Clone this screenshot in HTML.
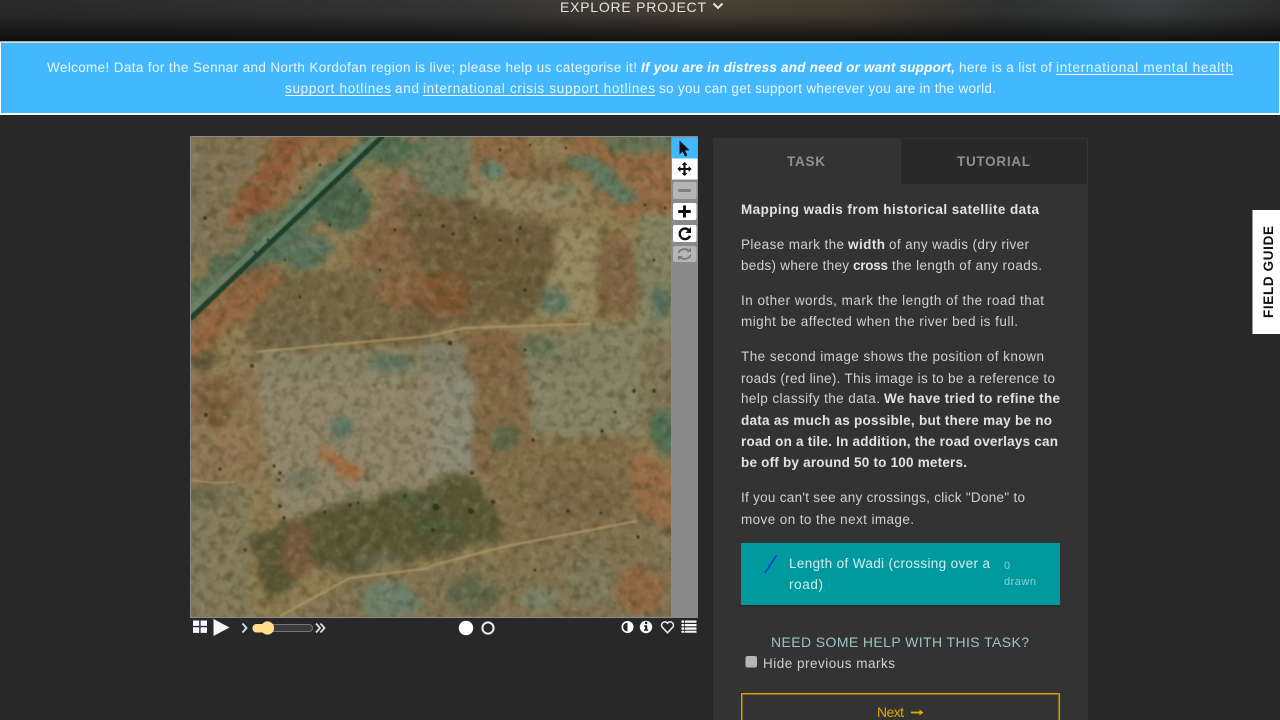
<!DOCTYPE html>
<html><head><meta charset="utf-8"><title>Mapping wadis</title>
<style>
html,body{margin:0;padding:0;width:1280px;height:720px;overflow:hidden;background:#282828}
svg{position:absolute;left:0;top:0;display:block}
text{font-family:"Liberation Sans",sans-serif;font-size:14px}
.p{fill:#d0d0d0;font-size:13.5px}
.b{fill:#e2e2e2;font-weight:bold;font-size:13.5px}
.w{fill:#e8f6ff;font-size:13.5px}
</style></head><body>
<svg width="1280" height="720" viewBox="0 0 1280 720" xmlns="http://www.w3.org/2000/svg">
<defs>
<filter id="b3" filterUnits="userSpaceOnUse" x="150" y="100" width="560" height="560" color-interpolation-filters="sRGB">
<feTurbulence type="fractalNoise" baseFrequency="0.05" numOctaves="3" seed="4" result="t"/>
<feDisplacementMap in="SourceGraphic" in2="t" scale="16" xChannelSelector="R" yChannelSelector="G" result="d"/>
<feGaussianBlur in="d" stdDeviation="3.4" result="g"/>
<feColorMatrix in="g" type="saturate" values="0.78"/>
</filter>
<filter id="b05" filterUnits="userSpaceOnUse" x="150" y="100" width="560" height="560" color-interpolation-filters="sRGB"><feGaussianBlur stdDeviation="0.8"/></filter>
<filter id="noise" x="0" y="0" width="100%" height="100%" color-interpolation-filters="sRGB">
<feTurbulence type="fractalNoise" baseFrequency="0.1" numOctaves="3" seed="7"/>
<feColorMatrix values="0 0 0 0 .62  0 0 0 0 .6  0 0 0 0 .46  .6 .6 0 0 -.55"/>
</filter>
<filter id="noise2" x="0" y="0" width="100%" height="100%" color-interpolation-filters="sRGB">
<feTurbulence type="fractalNoise" baseFrequency="0.11" numOctaves="2" seed="21"/>
<feColorMatrix values="0 0 0 0 .25  0 0 0 0 .24  0 0 0 0 .12  .7 .7 0 0 -.63"/>
</filter>
<clipPath id="img"><rect x="191" y="137" width="480" height="480"/></clipPath>
<linearGradient id="hx" x1="0" y1="0" x2="1" y2="0">
<stop offset="0" stop-color="#2a2a2a"/><stop offset=".16" stop-color="#2e2e2e"/><stop offset=".38" stop-color="#363636"/><stop offset=".55" stop-color="#4a4236"/><stop offset=".67" stop-color="#433c30"/><stop offset=".78" stop-color="#303131"/><stop offset=".9" stop-color="#3b3f3f"/><stop offset="1" stop-color="#2c2c2c"/>
</linearGradient>
<linearGradient id="hy" x1="0" y1="0" x2="0" y2="1"><stop offset="0" stop-color="#0c0c0c" stop-opacity="0"/><stop offset=".35" stop-color="#0c0c0c" stop-opacity=".1"/><stop offset="1" stop-color="#0c0c0c" stop-opacity=".92"/></linearGradient>
</defs>

<!-- header -->
<rect width="1280" height="41" fill="url(#hx)"/>
<rect width="1280" height="41" fill="url(#hy)"/>
<text x="560" y="12" textLength="146" style="font-size:14px;fill:#e4e4e4">EXPLORE PROJECT</text>
<path d="M713.5 3.5l4.5 4.5 4.5-4.5" fill="none" stroke="#e4e4e4" stroke-width="2"/>

<!-- banner -->
<rect x="0" y="41" width="1280" height="74" fill="#fff"/>
<rect x="0" y="41" width="1280" height="1.4" fill="#aaa"/>
<rect x="1" y="43" width="1278" height="70" fill="#43b8ff"/>
<text class="w" x="47" y="72" textLength="590">Welcome! Data for the Sennar and North Kordofan region is live; please help us categorise it!</text>
<text class="w" x="641" y="72" textLength="314" style="font-weight:bold;font-style:italic;fill:#fff">If you are in distress and need or want support,</text>
<text class="w" x="959" y="72" textLength="93">here is a list of</text>
<text class="w" x="1056" y="72" textLength="177">international mental health</text>
<rect x="1056" y="74" width="177" height="1" fill="#fff"/>
<text class="w" x="285" y="93" textLength="106">support hotlines</text>
<rect x="285" y="95" width="106" height="1" fill="#fff"/>
<text class="w" x="395" y="93" textLength="24">and</text>
<text class="w" x="423" y="93" textLength="232">international crisis support hotlines</text>
<rect x="423" y="95" width="232" height="1" fill="#fff"/>
<text class="w" x="659" y="93" textLength="337">so you can get support wherever you are in the world.</text>

<!-- satellite image -->
<rect x="190" y="136" width="508" height="482" fill="#8a8a8a"/>
<g clip-path="url(#img)">
<rect x="191" y="137" width="480" height="480" fill="#8e7a52"/>
<g filter="url(#b3)">
<!-- top-left -->
<rect x="175" y="120" width="120" height="140" fill="#84724a"/>
<polygon points="280,120 395,120 370,170 300,230 240,225 225,215" fill="#9a6a38"/>
<polygon points="290,126 315,126 260,215 225,225" fill="#99562a"/>
<polygon points="300,170 360,150 385,165 330,215 275,240" fill="#8e7b48"/>
<polygon points="175,300 270,225 300,240 240,300" fill="#877446"/>
<polygon points="175,340 175,300 260,255 275,270" fill="#9a6232"/>
<!-- road corridor -->
<polygon points="375,127 395,127 280,262 225,275 175,335 175,300" fill="#4f7250"/>
<ellipse cx="345" cy="205" rx="30" ry="26" fill="#456848"/>
<ellipse cx="300" cy="250" rx="32" ry="18" fill="#527458"/>
<ellipse cx="268" cy="225" rx="20" ry="14" fill="#5a7047"/>
<ellipse cx="232" cy="265" rx="26" ry="11" fill="#4a6848"/>
<ellipse cx="395" cy="150" rx="30" ry="16" fill="#4b6d47"/>
<ellipse cx="412" cy="183" rx="18" ry="14" fill="#60785e"/>
<!-- right of road top -->
<rect x="380" y="175" width="60" height="90" fill="#906a42"/>
<polygon points="370,225 430,190 430,270 350,265" fill="#8b6236"/>
<rect x="420" y="127" width="50" height="70" fill="#6a7856"/>
<rect x="475" y="127" width="55" height="55" fill="#96663a"/>
<rect x="525" y="160" width="48" height="30" fill="#856338"/>
<rect x="470" y="180" width="110" height="32" fill="#958254"/>
<polygon points="555,127 681,127 681,228 620,215 575,170" fill="#9e6737"/>
<polygon points="590,127 681,127 681,155 620,152" fill="#62724d"/>
<polygon points="565,155 595,158 640,200 620,202 585,175" fill="#567a5c"/>
<ellipse cx="490" cy="171" rx="12" ry="9" fill="#558268"/>
<ellipse cx="570" cy="191" rx="5" ry="6" fill="#527858"/>
<!-- dark field left -->
<polygon points="262,270 430,270 430,343 340,345 256,355 250,345 240,295" fill="#78653b"/>
<ellipse cx="410" cy="290" rx="35" ry="18" fill="#946236"/>
<ellipse cx="422" cy="314" rx="12" ry="22" fill="#584c28"/>
<ellipse cx="300" cy="330" rx="40" ry="15" fill="#74663d"/>
<polygon points="175,365 175,345 270,272 285,280 215,345" fill="#9f6132"/>
<ellipse cx="203" cy="360" rx="14" ry="8" fill="#64522e"/>
<!-- field grey-green under -->
<polygon points="256,356 340,350 430,344 463,345 463,380 430,420 260,400" fill="#89825d"/>
<ellipse cx="388" cy="362" rx="22" ry="10" fill="#577256"/>
<!-- center dark field -->
<polygon points="396,199 473,199 497,213 553,222 555,270 533,316 467,323 395,335 430,290" fill="#705b32"/>
<ellipse cx="444" cy="295" rx="26" ry="24" fill="#885224"/>
<ellipse cx="525" cy="280" rx="20" ry="24" fill="#695a2d"/>
<polygon points="553,229 600,229 597,316 533,318 556,270" fill="#9a8a57"/>
<ellipse cx="555" cy="302" rx="14" ry="13" fill="#57765c"/>
<polygon points="598,236 637,240 635,315 595,315" fill="#856238"/>
<rect x="637" y="215" width="50" height="108" fill="#848258"/>
<ellipse cx="662" cy="304" rx="10" ry="16" fill="#4d725a"/>
<!-- below path -->
<rect x="463" y="330" width="60" height="50" fill="#896338"/>
<rect x="425" y="343" width="40" height="33" fill="#7f7e62"/>
<rect x="524" y="334" width="56" height="45" fill="#7f7d5b"/>
<rect x="580" y="324" width="105" height="60" fill="#84825a"/>
<ellipse cx="540" cy="345" rx="16" ry="8" fill="#5e6d48"/>
<!-- left lower -->
<rect x="175" y="372" width="85" height="112" fill="#947246"/>
<ellipse cx="215" cy="402" rx="22" ry="24" fill="#875f32"/>
<ellipse cx="235" cy="440" rx="18" ry="18" fill="#9b754d"/>
<polygon points="258,378 430,378 430,486 340,505 282,520 266,460" fill="#928462"/>
<ellipse cx="340" cy="429" rx="10" ry="12" fill="#587662"/>
<ellipse cx="302" cy="480" rx="17" ry="12" fill="#767858"/>
<polygon points="318,445 335,452 352,460 362,470 355,490 345,480 322,462" fill="#b26a32"/>
<!-- bottom-left -->
<rect x="175" y="486" width="75" height="145" fill="#847a50"/>
<ellipse cx="205" cy="495" rx="20" ry="10" fill="#6e6842"/>
<!-- dark green band -->
<polygon points="430,486 460,473 487,489 505,540 430,556 350,575 310,565 266,606 250,535 340,505" fill="#59552a"/>
<ellipse cx="298" cy="550" rx="14" ry="30" fill="#7d5832"/>
<ellipse cx="420" cy="500" rx="26" ry="10" fill="#4f5832"/>
<ellipse cx="435" cy="525" rx="22" ry="12" fill="#49552c"/>
<ellipse cx="380" cy="560" rx="24" ry="8" fill="#646848"/>
<!-- lower middle -->
<polygon points="430,376 473,376 490,470 463,472 430,482" fill="#8d8b72"/>
<rect x="472" y="376" width="60" height="100" fill="#8a673d"/>
<ellipse cx="505" cy="441" rx="13" ry="12" fill="#5d6841"/>
<rect x="530" y="376" width="110" height="60" fill="#87825e"/>
<polygon points="640,340 681,340 681,470 655,450 640,420" fill="#84754d"/>
<ellipse cx="664" cy="432" rx="14" ry="22" fill="#457050"/>
<polygon points="505,450 625,430 650,470 665,630 500,630 505,545 490,490" fill="#866c3f"/>
<polygon points="632,450 675,470 681,540 650,530 630,490" fill="#a26937"/>
<polygon points="550,470 625,480 620,516 530,520" fill="#7c663c"/>
<!-- bottom -->
<polygon points="270,630 350,578 430,568 510,550 640,524 681,530 681,630" fill="#847246"/>
<ellipse cx="390" cy="600" rx="28" ry="18" fill="#658268"/>
<ellipse cx="472" cy="595" rx="26" ry="16" fill="#5f6844"/>
<ellipse cx="590" cy="580" rx="26" ry="24" fill="#7f7852"/>
<ellipse cx="640" cy="590" rx="24" ry="24" fill="#9c6436"/>
<ellipse cx="540" cy="600" rx="20" ry="14" fill="#798260"/>
</g>
<rect x="191" y="137" width="480" height="480" filter="url(#noise)"/>
<rect x="191" y="137" width="480" height="480" filter="url(#noise2)"/>
<g filter="url(#b05)">
<!-- paths -->
<g fill="none" stroke="#ad9a6c" stroke-width="2.5" opacity=".7">
<path d="M256 352 L340 344 L430 336 L463 328 L590 324"/>
<path d="M430 566 L507 546 L637 521"/>
<path d="M280 616 L350 578 L430 568"/>
<path d="M190 480 L216 483 L235 482" stroke-width="1.5"/>
</g>
<!-- road -->
<path d="M380 136 L190 314" stroke="#6f9078" stroke-width="11" fill="none" opacity=".55"/>
<path d="M383 136 L190 319" stroke="#1e3f2a" stroke-width="5" fill="none"/>
<!-- trees -->
<g fill="#2f2e1c" opacity=".85">
<circle cx="205" cy="218" r="2"/><circle cx="300" cy="297" r="1.5"/><circle cx="252" cy="366" r="2"/>
<circle cx="443" cy="226" r="1.8"/><circle cx="453" cy="234" r="1.6"/><circle cx="520" cy="228" r="1.5"/><circle cx="517" cy="240" r="1.5"/><circle cx="500" cy="240" r="1.5"/><circle cx="475" cy="218" r="1.5"/><circle cx="525" cy="290" r="2"/>
<circle cx="450" cy="343" r="2.2"/><circle cx="525" cy="350" r="1.5"/>
<circle cx="206" cy="415" r="2"/><circle cx="220" cy="469" r="1.8"/><circle cx="274" cy="466" r="1.6"/><circle cx="280" cy="473" r="1.6"/><circle cx="279" cy="480" r="1.5"/><circle cx="280" cy="506" r="1.7"/><circle cx="284" cy="518" r="1.7"/><circle cx="245" cy="550" r="1.5"/>
<circle cx="436" cy="507" r="3.5"/><circle cx="471" cy="511" r="3"/><circle cx="493" cy="502" r="2.2"/><circle cx="433" cy="530" r="2"/><circle cx="472" cy="473" r="2"/><circle cx="533" cy="440" r="1.6"/><circle cx="568" cy="511" r="1.7"/><circle cx="601" cy="513" r="1.5"/><circle cx="638" cy="537" r="1.7"/><circle cx="535" cy="570" r="1.5"/>
<circle cx="634" cy="391" r="2"/><circle cx="654" cy="391" r="2"/><circle cx="615" cy="412" r="1.6"/><circle cx="602" cy="431" r="1.6"/>
<circle cx="350" cy="505" r="1.7"/><circle cx="405" cy="496" r="1.6"/><circle cx="325" cy="512" r="1.5"/><circle cx="358" cy="503" r="1.5"/>
<circle cx="320" cy="165" r="1.3"/><circle cx="340" cy="160" r="1.3"/><circle cx="300" cy="188" r="1.3"/><circle cx="360" cy="190" r="1.3"/><circle cx="268" cy="240" r="1.4"/><circle cx="255" cy="252" r="1.4"/><circle cx="330" cy="225" r="1.4"/><circle cx="285" cy="260" r="1.4"/><circle cx="395" cy="230" r="1.4"/><circle cx="420" cy="215" r="1.4"/><circle cx="380" cy="270" r="1.6"/>
<circle cx="566" cy="148" r="1.4"/><circle cx="645" cy="205" r="1.4"/><circle cx="665" cy="208" r="1.4"/><circle cx="654" cy="260" r="1.4"/><circle cx="500" cy="150" r="1.5"/><circle cx="530" cy="145" r="1.3"/>
</g>
</g>
</g>
<rect x="190.5" y="136.5" width="481" height="481" fill="none" stroke="#8a8a8a" stroke-width="1"/>

<!-- toolbar -->
<rect x="672" y="137.5" width="25.5" height="21" fill="#43b8ff"/>
<path d="M679.5 140.5 L679.5 154.5 L682.7 151.5 L685 156.5 L687.3 155.5 L685 150.5 L689.5 150.2 Z" fill="#111"/>
<rect x="672" y="158.5" width="25.5" height="21" fill="#fff"/>
<path d="M684.5 162 L687.5 165 H685.6 V168 H688.6 V166 L691.6 169 L688.6 172 V170 H685.6 V173 H687.5 L684.5 176 L681.5 173 H683.4 V170 H680.4 V172 L677.4 169 L680.4 166 V168 H683.4 V165 H681.5 Z" fill="#111"/>
<rect x="673" y="182" width="23.5" height="17" rx="2" fill="#b5b5b5"/>
<rect x="678" y="189" width="13" height="3" rx="1" fill="#808080"/>
<rect x="673" y="203" width="23.5" height="17" rx="2" fill="#fff"/>
<path d="M683 205.5h3v4.5h4.8v3H686v4.5h-3V213h-4.8v-3H683z" fill="#111"/>
<rect x="673" y="225" width="23.5" height="17" rx="2" fill="#fff"/>
<path d="M689 230.3 A5.3 5.3 0 1 0 690 235.7" fill="none" stroke="#111" stroke-width="2.4"/>
<path d="M691 227 V233 H685.5 Z" fill="#111"/>
<rect x="673" y="246" width="23.5" height="16" rx="2" fill="#b5b5b5"/>
<path d="M678.5 253 A6 5 0 0 1 688.5 250.5 M690.5 255 A6 5 0 0 1 680.5 257.5" fill="none" stroke="#777" stroke-width="1.8"/>
<path d="M691 247.5 V252 H686.5 Z M678 260.5 V256 H682.5 Z" fill="#777"/>

<!-- bottom controls -->
<g fill="#f4f8ff">
<path d="M193 620.5h6.2v5.4H193zM200.6 620.5h6.4v5.4h-6.4zM193 627.3h6.2v5.6H193zM200.6 627.3h6.4v5.6h-6.4z"/>
<path d="M213.5 619 L229.5 627.5 L213.5 636 Z" fill="#f2f7fc"/>
</g>
<path d="M242.5 623.5 L246.5 628 L242.5 632.5" fill="none" stroke="#cfe4f5" stroke-width="1.8"/>
<rect x="253.5" y="624.5" width="59" height="7" rx="3.5" fill="#3a3a3a" stroke="#777" stroke-width="1"/>
<rect x="252.5" y="624" width="14" height="8.5" rx="4" fill="#ffe08a"/>
<circle cx="267.5" cy="628" r="6.6" fill="#ffe08a"/>
<path d="M316 623.5 L320 628 L316 632.5 M320.5 623.5 L324.5 628 L320.5 632.5" fill="none" stroke="#cfe4f5" stroke-width="1.8"/>

<circle cx="466" cy="628" r="7.2" fill="#fff"/>
<circle cx="488" cy="628" r="5.6" fill="none" stroke="#f0f0f0" stroke-width="2"/>

<circle cx="627.5" cy="627" r="6" fill="#fff"/>
<path d="M627.5 622.6 A4.4 4.4 0 0 0 627.5 631.4 Z" fill="#282828"/>
<circle cx="646" cy="627" r="6.2" fill="#f4f8ff"/>
<rect x="645" y="621.8" width="2.2" height="2.2" fill="#222"/>
<path d="M644.2 625.3h3v4h.9v1.5h-4v-1.5h.9v-2.5h-.8z" fill="#222"/>
<path d="M667.5 632.8 L662.2 627.2 A3.3 3.3 0 0 1 667.5 623.2 A3.3 3.3 0 0 1 672.8 627.2 Z" fill="none" stroke="#f0f0f0" stroke-width="1.5"/>
<path d="M681.5 620.5h15v2.3h-15zM681.5 624h15v2.3h-15zM681.5 627.4h15v2.3h-15zM681.5 630.7h15v2h-15z" fill="#f4f8ff"/>
<path d="M684.5 620.5v12" stroke="#282828" stroke-width=".8"/>

<!-- panel -->
<rect x="713" y="138" width="375" height="582" fill="#333"/>
<rect x="901" y="139" width="186" height="45" fill="#292929"/>
<text x="787" y="166" textLength="38" style="font-weight:bold;font-size:13.5px;fill:#8f8f8f">TASK</text>
<text x="957" y="166" textLength="73" style="font-weight:bold;font-size:13.5px;fill:#8f8f8f">TUTORIAL</text>

<text class="b" x="741" y="214" textLength="298">Mapping wadis from historical satellite data</text>

<text class="p" x="741" y="249" textLength="103">Please mark the</text>
<text class="b" x="848" y="249" textLength="37">width</text>
<text class="p" x="889" y="249" textLength="140">of any wadis (dry river</text>
<text class="p" x="741" y="270" textLength="108">beds) where they</text>
<text class="b" x="853" y="270" textLength="35">cross</text>
<text class="p" x="892" y="270" textLength="150">the length of any roads.</text>

<text class="p" x="741" y="305" textLength="303">In other words, mark the length of the road that</text>
<text class="p" x="741" y="326" textLength="277">might be affected when the river bed is full.</text>

<text class="p" x="741" y="361" textLength="303">The second image shows the position of known</text>
<text class="p" x="741" y="383" textLength="314">roads (red line). This image is to be a reference to</text>
<text class="p" x="741" y="403" textLength="139">help classify the data.</text>
<text class="b" x="884" y="403" textLength="176">We have tried to refine the</text>
<text class="b" x="741" y="425" textLength="311">data as much as possible, but there may be no</text>
<text class="b" x="741" y="446" textLength="317">road on a tile. In addition, the road overlays can</text>
<text class="b" x="741" y="467" textLength="226">be off by around 50 to 100 meters.</text>

<text class="p" x="741" y="502" textLength="284">If you can't see any crossings, click "Done" to</text>
<text class="p" x="741" y="524" textLength="173">move on to the next image.</text>

<rect x="741" y="543" width="319" height="62" fill="#009a9e"/>
<rect x="741" y="605" width="319" height="1.5" fill="#222" opacity=".6"/>
<path d="M765 573 L776.5 555.5" stroke="#0a2fd8" stroke-width="1.5"/>
<text class="p" x="789" y="568" textLength="201" style="fill:#cfeeee">Length of Wadi (crossing over a</text>
<text class="p" x="789" y="589" textLength="34" style="fill:#cfeeee">road)</text>
<text x="1004" y="569" textLength="7" style="font-size:11px;fill:#8cd0d0">0</text>
<text x="1004" y="585" textLength="32" style="font-size:11px;fill:#8cd0d0">drawn</text>

<text x="771" y="647" textLength="258" style="font-size:14px;fill:#9cc4c4">NEED SOME HELP WITH THIS TASK?</text>
<rect x="745.5" y="656" width="11.5" height="11.5" rx="2" fill="#b5b5b5"/>
<text class="p" x="763" y="668" textLength="132">Hide previous marks</text>

<rect x="741" y="693" width="319" height="1.5" fill="#d4a000"/>
<rect x="741" y="693" width="1.5" height="27" fill="#d4a000"/>
<rect x="1058.5" y="693" width="1.5" height="27" fill="#d4a000"/>
<text x="877" y="717" textLength="27" style="font-size:14px;fill:#e0a800">Next</text>
<path d="M911 712.5h10" stroke="#e0a800" stroke-width="1.8"/>
<path d="M919.5 709.5 L923.5 712.5 L919.5 715.5 Z" fill="#e0a800"/>

<!-- field guide -->
<rect x="1253" y="210" width="27" height="124" fill="#fff"/>
<rect x="1252" y="210" width="1" height="124" fill="#999"/>
<text transform="translate(1273 318) rotate(-90)" x="0" y="0" textLength="92" style="font-weight:bold;font-size:13.5px;fill:#111">FIELD GUIDE</text>
</svg>
</body></html>
